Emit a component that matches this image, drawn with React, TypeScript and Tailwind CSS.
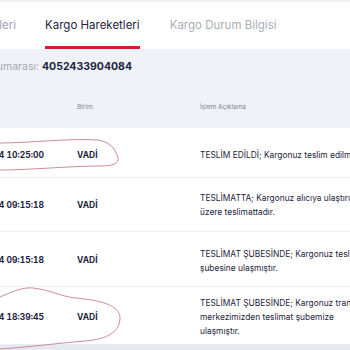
import React from 'react'

const rows = [
  {
    date: '16.05.2024 10:25:00',
    unit: 'VADİ',
    lines: ['TESLİM EDİLDİ; Kargonuz teslim edilmiştir.'],
    height: 'h-[50px] pt-[5px]',
  },
  {
    date: '16.05.2024 09:15:18',
    unit: 'VADİ',
    lines: ['TESLİMATTA; Kargonuz alıcıya ulaştırılmak', 'üzere teslimattadır.'],
    height: 'h-[54px] pt-[1px]',
  },
  {
    date: '16.05.2024 09:15:18',
    unit: 'VADİ',
    lines: ['TESLİMAT ŞUBESİNDE; Kargonuz teslimat', 'şubesine ulaşmıştır.'],
    height: 'h-[55px] pt-[3px]',
  },
  {
    date: '15.05.2024 18:39:45',
    unit: 'VADİ',
    lines: [
      'TESLİMAT ŞUBESİNDE; Kargonuz transfer',
      'merkezimizden teslimat şubemize',
      'ulaşmıştır.',
    ],
    height: 'h-[58px] pt-[3px]',
  },
]

function ClipLeft({
  children,
  className,
}: {
  children: React.ReactNode
  className: string
}) {
  // shows only the tail of the text, as if the table were scrolled
  return (
    <div className={`flex shrink-0 justify-end overflow-hidden ${className}`}>
      <span className="shrink-0 whitespace-nowrap">{children}</span>
    </div>
  )
}

export default function App() {
  return (
    <div className="relative w-[350px] h-[350px] overflow-hidden bg-white font-['Inter',sans-serif] text-[#1d2540]">
      <div className="h-[2px] bg-[#f1f2f5]" />

      <div className="flex h-[47px] items-stretch text-[11.5px]">
        <ClipLeft className="w-[16px] items-center text-[#9ea2ad]">
          Gönderi Bilgileri
        </ClipLeft>
        <div className="ml-[29px] flex items-center border-b-[3px] border-[#d21f2f] pt-[3px] text-[#1d2540]">
          Kargo Hareketleri
        </div>
        <div className="ml-[30px] flex items-center text-[#a9adb6]">
          Kargo Durum Bilgisi
        </div>
      </div>

      <div className="bg-[#eff2f9]">
        <div className="flex h-[36px] items-center text-[10.5px]">
          <ClipLeft className="w-[39px] text-[#a3a7b2]">Gönderi Numarası:</ClipLeft>
          <span className="ml-[3px] font-bold text-[#1d2540]">4052433904084</span>
        </div>
        <div className="flex h-[43px] items-center pt-[3px] text-[6.5px] text-[#7d8290]">
          <div className="ml-[77px] w-[123px] shrink-0">Birim</div>
          <div className="whitespace-nowrap">İşlem Açıklama</div>
        </div>
      </div>

      {rows.map((row, i) => (
        <div
          key={i}
          className={`flex ${row.height} items-center border-b border-[#eceef3] text-[8.5px]`}
        >
          <ClipLeft className="w-[44px] font-bold tabular-nums">{row.date}</ClipLeft>
          <div className="ml-[33px] w-[123px] shrink-0 font-bold">{row.unit}</div>
          <div className="flex shrink-0 flex-col text-[8.4px] leading-[14px]">
            {row.lines.map((l) => (
              <div key={l} className="whitespace-nowrap">
                {l}
              </div>
            ))}
          </div>
        </div>
      ))}

      <div className="h-[10px] bg-[#e5e8f0]" />

      <svg
        className="pointer-events-none absolute left-0 top-0"
        width="350"
        height="350"
        viewBox="0 0 350 350"
        fill="none"
      >
        <path
          d="M0,143 C30,143 70,138 97,140 C110,141 116,150 118,158 C119,164 112,166 100,166 C70,166 30,170 0,170"
          stroke="#cd8d96"
          strokeWidth="1"
        />
        <path
          d="M0,297 C12,292 22,287 33,288 C50,290 60,296 75,298 C100,300 120,305 120,318 C120,335 100,340 85,341 C60,343 30,347 0,349"
          stroke="#cd8d96"
          strokeWidth="1"
        />
      </svg>
    </div>
  )
}
